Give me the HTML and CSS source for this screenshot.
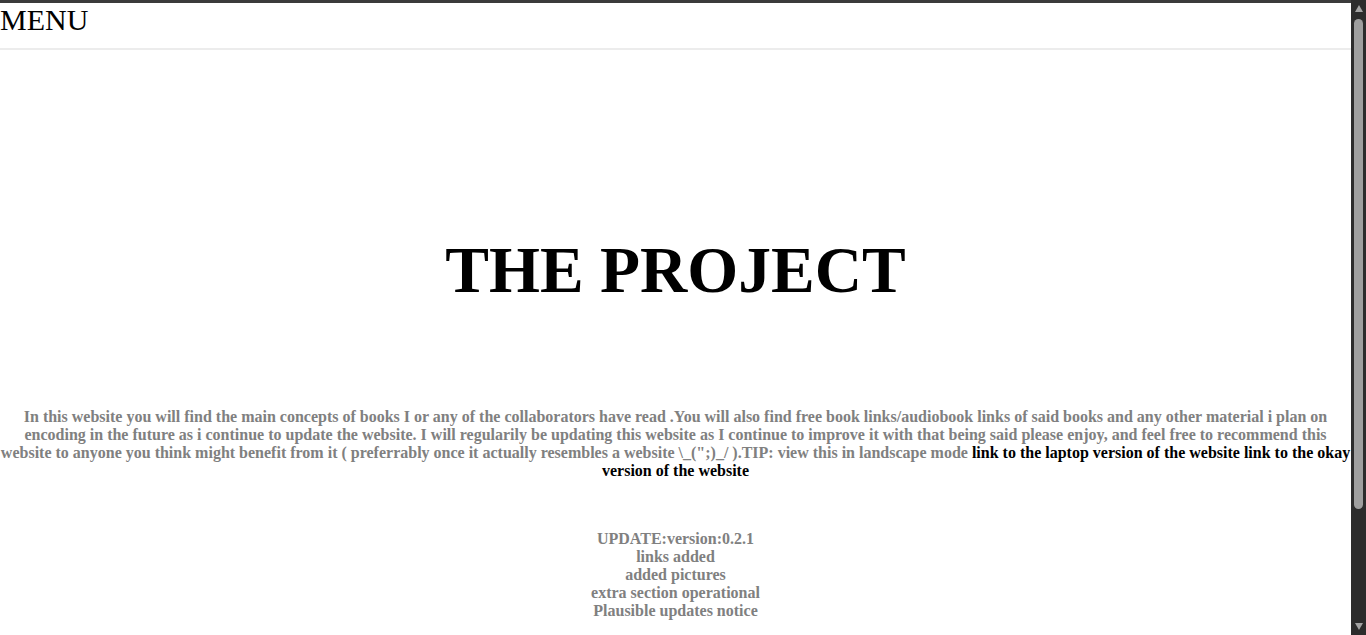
FILE: index.html
```html
<!DOCTYPE html>
<html lang="en">
<head>
<meta charset="utf-8">
<title>THE PROJECT</title>
<link rel="stylesheet" href="styles.css">
</head>
<body>
<div class="viewport">
  <header class="nav">
    <div class="menu">MENU</div>
  </header>
  <main class="page">
    <section class="hero">
      <h1 class="title">THE PROJECT</h1>
    </section>
    <p class="intro">In this website you will find the main concepts of books I or any of the collaborators have read .You will also find free book links/audiobook links of said books and any other material i plan on encoding in the future as i continue to update the website. I will regularily be updating this website as I continue to improve it with that being said please enjoy, and feel free to recommend this website to anyone you think might benefit from it ( preferrably once it actually resembles a website \_(";)_/ ).TIP: view this in landscape mode <a class="link" href="#">link to the laptop version of the website</a> <a class="link" href="#">link to the okay version of the website</a></p>
    <div class="updates">
      <div>UPDATE:version:0.2.1</div>
      <div>links added</div>
      <div>added pictures</div>
      <div>extra section operational</div>
      <div>Plausible updates notice</div>
    </div>
  </main>
</div>
<div class="scrollbar" aria-hidden="true">
  <div class="arrow arrow-up"></div>
  <div class="track"><div class="thumb"></div></div>
  <div class="arrow arrow-down"></div>
</div>
</body>
</html>
```
FILE: styles.css
```css
html {
  background: #ffffff;
  overflow: hidden;
}
body {
  margin: 0;
  color: #000;
  background: #ffffff;
  font-family: "Liberation Serif", "Times New Roman", serif;
}
.viewport {
  width: 1351px;
  border-top: 3px solid #3b3b3b;
}
.nav {
  height: 45px;
  border-bottom: 2px solid #ececec;
}
.menu {
  font-size: 30px;
  line-height: 34px;
  color: #000;
}
.hero {
  padding-top: 183px;
  padding-bottom: 100px;
}
.title {
  margin: 0;
  font-size: 65.5px;
  line-height: 75px;
  font-weight: bold;
  text-align: center;
}
.intro {
  margin: 0;
  font-size: 16px;
  line-height: 18px;
  font-weight: bold;
  color: #808080;
  text-align: center;
}
.link {
  color: #000;
  text-decoration: none;
}
.updates {
  padding-top: 50px;
  padding-bottom: 170px;
  font-size: 16px;
  line-height: 18px;
  font-weight: bold;
  color: #808080;
  text-align: center;
}
.scrollbar {
  position: fixed;
  top: 0;
  right: 0;
  width: 15px;
  height: 100vh;
  background: #2c2c2c;
  display: flex;
  flex-direction: column;
  align-items: center;
}
.arrow {
  width: 0;
  height: 0;
  border-left: 4.5px solid transparent;
  border-right: 4.5px solid transparent;
  flex: none;
}
.arrow-up {
  margin-top: 5px;
  border-bottom: 7px solid #a3a3a3;
}
.arrow-down {
  margin-bottom: 5px;
  border-top: 7px solid #a3a3a3;
}
.track {
  flex: 1;
  width: 100%;
  display: flex;
  justify-content: center;
  padding: 7px 0 0;
}
.thumb {
  width: 9px;
  height: 490px;
  border-radius: 5px;
  background: #9f9f9f;
}
```
